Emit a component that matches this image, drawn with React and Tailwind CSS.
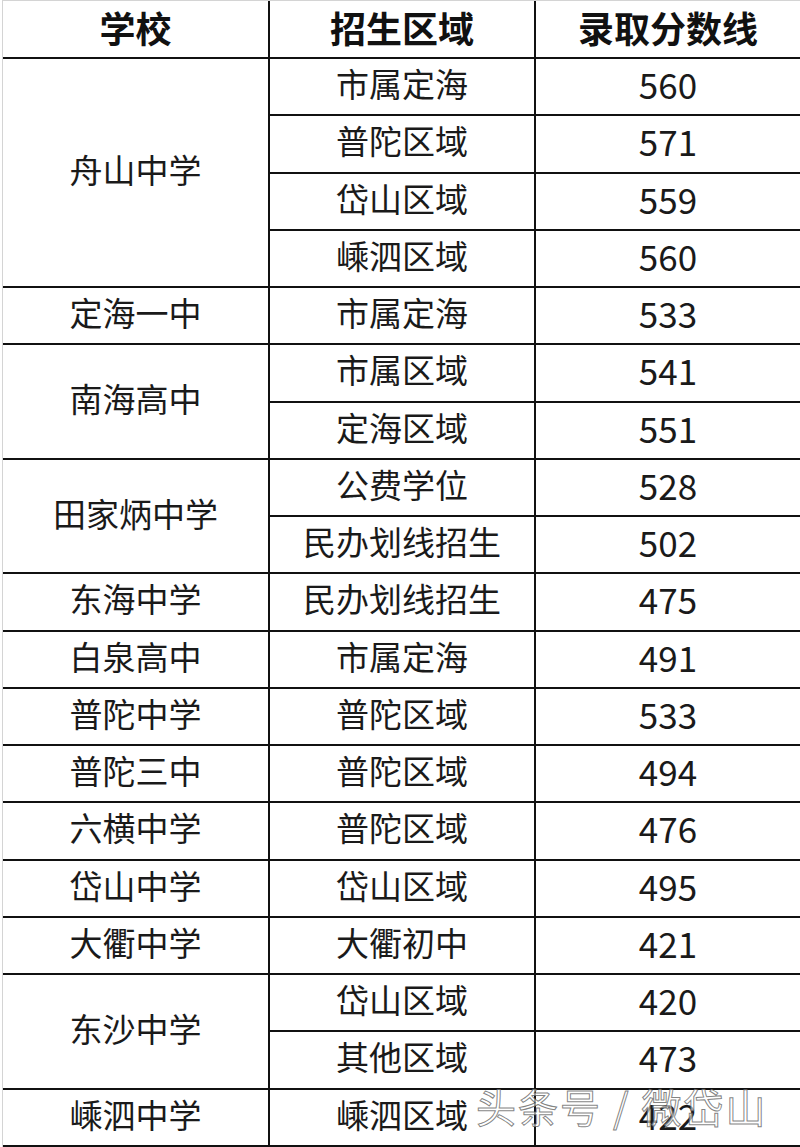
import React from "react";

const groups = [
  { school: "舟山中学", rows: [["市属定海", "560"], ["普陀区域", "571"], ["岱山区域", "559"], ["嵊泗区域", "560"]] },
  { school: "定海一中", rows: [["市属定海", "533"]] },
  { school: "南海高中", rows: [["市属区域", "541"], ["定海区域", "551"]] },
  { school: "田家炳中学", rows: [["公费学位", "528"], ["民办划线招生", "502"]] },
  { school: "东海中学", rows: [["民办划线招生", "475"]] },
  { school: "白泉高中", rows: [["市属定海", "491"]] },
  { school: "普陀中学", rows: [["普陀区域", "533"]] },
  { school: "普陀三中", rows: [["普陀区域", "494"]] },
  { school: "六横中学", rows: [["普陀区域", "476"]] },
  { school: "岱山中学", rows: [["岱山区域", "495"]] },
  { school: "大衢中学", rows: [["大衢初中", "421"]] },
  { school: "东沙中学", rows: [["岱山区域", "420"], ["其他区域", "473"]] },
  { school: "嵊泗中学", rows: [["嵊泗区域", "422"]] },
];

const spanClass = {
  1: "row-span-1",
  2: "row-span-2",
  4: "row-span-4",
};

export default function App() {
  const cells = [];
  groups.forEach((g, gi) => {
    g.rows.forEach((r, ri) => {
      if (ri === 0) {
        cells.push(
          <div
            key={`s${gi}`}
            className={`${spanClass[g.rows.length]} col-start-1 bg-white flex items-center justify-center pb-[6px] text-[33px] text-[#1a1a1a]`}
          >
            {g.school}
          </div>
        );
      }
      cells.push(
        <div key={`r${gi}-${ri}`} className="col-start-2 bg-white flex items-center justify-center pb-[6px] text-[33px] text-[#1a1a1a]">
          {r[0]}
        </div>
      );
      cells.push(
        <div key={`n${gi}-${ri}`} className="col-start-3 bg-white flex items-center justify-center pb-[6px] text-[35px] text-[#1a1a1a]">
          {r[1]}
        </div>
      );
    });
  });

  return (
    <div className="relative w-[800px] h-[1147px] bg-white overflow-hidden [font-family:'Noto_Sans_CJK_SC','Noto_Sans',sans-serif] leading-none">
      <div className="ml-[2px] border-l border-t border-[#d4d4d4]">
        <div className="grid grid-cols-[265px_264px_1fr] grid-rows-[56px_repeat(19,55.26px)] gap-[2px] bg-[#111] border-b-2 border-[#111]">
          <div className="bg-white flex items-center justify-center pb-[4px] text-[36px] font-bold text-[#111]">学校</div>
          <div className="bg-white flex items-center justify-center pb-[4px] text-[36px] font-bold text-[#111]">招生区域</div>
          <div className="bg-white flex items-center justify-center pb-[4px] text-[36px] font-bold text-[#111]">录取分数线</div>
          {cells}
        </div>
      </div>
      <div className="absolute left-[476px] top-[1086px] text-[40px] tracking-[2px] text-white/60 [-webkit-text-stroke:1px_rgba(90,90,90,0.75)] whitespace-nowrap">
        头条号 / 微岱山
      </div>
    </div>
  );
}
